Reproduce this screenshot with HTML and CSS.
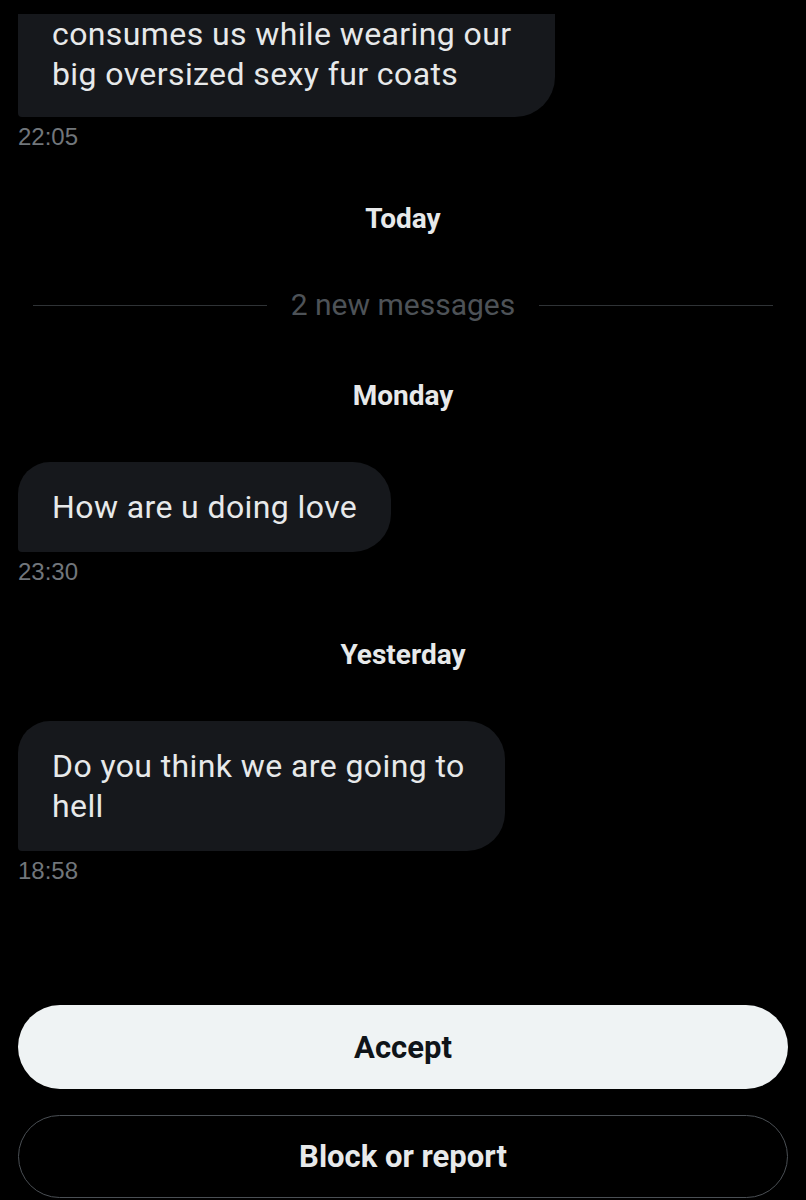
FILE: index.html
```html
<!DOCTYPE html>
<html lang="en">
<head>
<meta charset="utf-8">
<title>Message request</title>
<link rel="stylesheet" href="styles.css">
</head>
<body>
<main class="chat">
  <div class="msg msg-first">
    <div class="bubble bubble-wide">consumes us while wearing our<br>big oversized sexy fur coats</div>
    <div class="time">22:05</div>
  </div>

  <div class="day day-today">Today</div>

  <div class="divider">
    <span class="divider-line"></span>
    <span class="divider-text">2 new messages</span>
    <span class="divider-line"></span>
  </div>

  <div class="day day-after-divider">Monday</div>

  <div class="msg">
    <div class="bubble">How are u doing love</div>
    <div class="time">23:30</div>
  </div>

  <div class="day">Yesterday</div>

  <div class="msg">
    <div class="bubble bubble-two">Do you think we are going to<br>hell</div>
    <div class="time">18:58</div>
  </div>
</main>

<footer class="actions">
  <button class="btn btn-accept">Accept</button>
  <button class="btn btn-block">Block or report</button>
</footer>
</body>
</html>
```

FILE: styles.css
```css
* {
  box-sizing: border-box;
}

html, body {
  margin: 0;
  padding: 0;
  background: #000;
}

body {
  width: 806px;
  height: 1200px;
  overflow: hidden;
  font-family: Roboto, "Noto Sans", sans-serif;
  color: #e7e9ea;
  display: flex;
  flex-direction: column;
}

.chat {
  display: flex;
  flex-direction: column;
  padding: 14px 18px 0;
}

.msg {
  display: flex;
  flex-direction: column;
  align-items: flex-start;
}

.bubble {
  background: #16181c;
  color: #e7e9ea;
  font-size: 32px;
  letter-spacing: 0.4px;
  line-height: 40px;
  padding: 25px 34px;
  border-radius: 32px 38px 38px 4px;
  max-width: 537px;
}

.bubble-two {
  padding-right: 40px;
}

.bubble-wide {
  width: 537px;
  padding-top: 0;
  padding-bottom: 23px;
  border-radius: 0 0 40px 4px;
}

.time {
  margin-top: 6px;
  font-family: "Liberation Sans", Arial, sans-serif;
  font-size: 24px;
  line-height: 28px;
  color: #71767b;
}

.day {
  margin: 53px 0 50px;
  text-align: center;
  font-family: "Liberation Sans Narrow", Roboto, sans-serif;
  font-weight: 700;
  font-size: 28px;
  line-height: 32px;
  color: #e7e9ea;
}

.day-today {
  margin: 52px 0 52px;
}

.day-after-divider {
  margin: 57px 0 50px;
}

.divider {
  display: flex;
  align-items: center;
  gap: 24px;
  padding: 0 15px;
}

.divider-line {
  flex: 1;
  height: 1px;
  background: #2f3336;
}

.divider-text {
  font-family: "Liberation Sans Narrow", Roboto, sans-serif;
  font-size: 30px;
  line-height: 36px;
  color: #4d5257;
}

.actions {
  margin-top: auto;
  display: flex;
  flex-direction: column;
  gap: 26px;
  padding: 0 18px;
  margin-bottom: 2px;
}

.btn {
  height: 84px;
  width: 100%;
  border-radius: 42px;
  font-family: "Liberation Sans Narrow", Roboto, sans-serif;
  font-weight: 700;
  font-size: 31px;
  cursor: pointer;
}

.btn-accept {
  background: #eff3f4;
  color: #0f1419;
  border: none;
}

.btn-block {
  height: 83px;
  background: #000;
  color: #e7e9ea;
  border: 1.5px solid #4a4f54;
}
```
